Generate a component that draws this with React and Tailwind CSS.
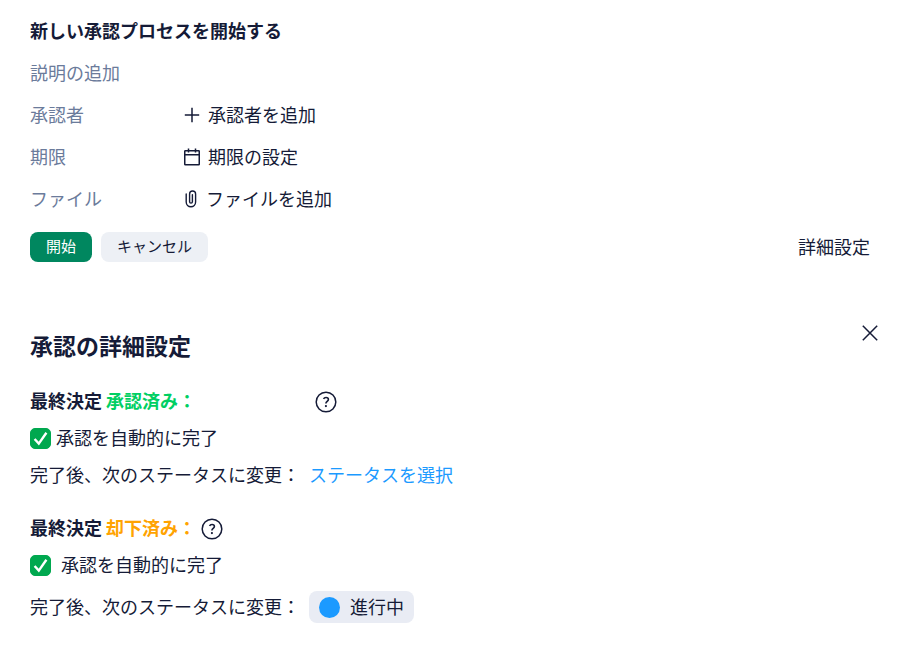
import { useState } from "react";

function PlusIcon() {
  return (
    <svg className="h-4 w-4" viewBox="0 0 16 16" fill="none" stroke="currentColor" strokeWidth="1.5" aria-hidden="true">
      <path d="M8 0.8v14.4M0.8 8h14.4" />
    </svg>
  );
}

function CalendarIcon() {
  return (
    <svg className="h-[18px] w-4" viewBox="0 0 16 18" fill="none" stroke="currentColor" strokeWidth="1.5" aria-hidden="true">
      <rect x="0.75" y="2.75" width="14.5" height="14" rx="0.6" />
      <path d="M0.75 6.75h14.5M4.5 0.5v4M11.5 0.5v4" />
    </svg>
  );
}

function ClipIcon() {
  return (
    <svg className="h-[18px] w-[14px]" viewBox="0 0 14 18" fill="none" stroke="currentColor" strokeWidth="1.4" strokeLinecap="round" aria-hidden="true">
      <path d="M2.2 4v8.1a4.7 4.7 0 0 0 9.4 0V4a3 3 0 0 0-6 0v7.7a1.4 1.4 0 0 0 2.8 0V4.6" />
    </svg>
  );
}

function CloseIcon() {
  return (
    <svg className="h-4 w-4" viewBox="0 0 16 16" fill="none" stroke="currentColor" strokeWidth="1.5" aria-hidden="true">
      <path d="M0.8 0.8l14.4 14.4M15.2 0.8L0.8 15.2" />
    </svg>
  );
}

function HelpButton() {
  return (
    <button type="button" aria-label="ヘルプ" className="h-[22px] w-[22px] shrink-0">
      <svg className="h-full w-full" viewBox="0 0 22 22" fill="none" stroke="currentColor" aria-hidden="true">
        <circle cx="11" cy="11" r="9.8" strokeWidth="1.5" />
        <path d="M8.6 8.1C9 7 9.9 6.5 11 6.5c1.4 0 2.4.8 2.4 2 0 1.9-2.5 2-2.5 4.1" strokeWidth="1.6" />
        <circle cx="10.9" cy="15.1" r="1.1" fill="currentColor" stroke="none" />
      </svg>
    </button>
  );
}

function Field({ label, icon, action }) {
  return (
    <div className="flex h-[42px] items-center">
      <span className="w-[154px] pb-[3px] text-[#6b7b9b]">{label}</span>
      <button type="button" className="flex items-center gap-2">
        {icon}
        <span className="pb-[3px]">{action}</span>
      </button>
    </div>
  );
}

function AutoComplete({ id, className }) {
  const [checked, setChecked] = useState(true);
  return (
    <div className={`flex items-center ${className}`}>
      <span className="grid h-[21px] w-[21px] shrink-0">
        <input
          id={id}
          type="checkbox"
          checked={checked}
          onChange={() => setChecked(!checked)}
          className="col-start-1 row-start-1 h-[21px] w-[21px] appearance-none rounded-[5px] border border-[#00a84f] checked:bg-[#00a84f]"
        />
        {checked && (
          <svg className="pointer-events-none col-start-1 row-start-1 h-[21px] w-[21px]" viewBox="0 0 21 21" fill="none" stroke="white" strokeWidth="2.4" aria-hidden="true">
            <path d="M4.6 11l4.2 4.6L16.4 4.8" />
          </svg>
        )}
      </span>
      <label htmlFor={id} className="pb-[3px]">承認を自動的に完了</label>
    </div>
  );
}

export default function App() {
  return (
    <main className="bg-white px-[30px] pt-[10px] pb-[30px] font-['Noto_Sans_CJK_JP',sans-serif] text-[18px] leading-[26px] text-[#151b37]">
      <section>
        <h1 className="flex h-[42px] items-center pb-[3px] font-bold">新しい承認プロセスを開始する</h1>
        <p className="flex h-[42px] items-center pb-[3px] text-[#6b7b9b]">説明の追加</p>
        <Field label="承認者" icon={<PlusIcon />} action="承認者を追加" />
        <Field label="期限" icon={<CalendarIcon />} action="期限の設定" />
        <Field label="ファイル" icon={<ClipIcon />} action="ファイルを追加" />
        <div className="mt-3 flex items-center">
          <button type="button" className="h-[30px] rounded-lg bg-[#00875f] px-4 pb-[3px] text-[15px] leading-[26px] text-white">
            開始
          </button>
          <button type="button" className="ml-[9px] h-[30px] rounded-lg bg-[#edf0f5] px-4 pb-[3px] text-[15px] leading-[26px]">
            キャンセル
          </button>
          <button type="button" className="ml-auto pb-[3px]">詳細設定</button>
        </div>
      </section>

      <section className="mt-[59px]">
        <div className="flex items-start justify-between">
          <h2 className="pt-[7px] pb-px text-[23px] leading-[34px] font-bold">承認の詳細設定</h2>
          <button type="button" aria-label="閉じる" className="-mr-3 p-1">
            <CloseIcon />
          </button>
        </div>

        <div className="mt-6 flex items-center">
          <h3 className="w-[285px] pb-[3px] font-bold">
            最終決定 <span className="text-[#00cf63]">承認済み：</span>
          </h3>
          <HelpButton />
        </div>
        <AutoComplete id="auto-approved" className="mt-2 gap-[5px]" />
        <div className="mt-2 flex items-center gap-[9px] pb-[3px]">
          <span>完了後、次のステータスに変更：</span>
          <button type="button" className="text-[#1b9aff]">ステータスを選択</button>
        </div>

        <div className="mt-6 flex items-center">
          <h3 className="w-[171px] pb-[3px] font-bold">
            最終決定 <span className="text-[#ffa300]">却下済み：</span>
          </h3>
          <HelpButton />
        </div>
        <AutoComplete id="auto-rejected" className="mt-2 gap-[10px]" />
        <div className="mt-[11px] flex items-center gap-[9px]">
          <span className="pb-[3px]">完了後、次のステータスに変更：</span>
          <button type="button" className="flex h-8 items-center gap-[10px] rounded-lg bg-[#e9ecf4] px-[10px]">
            <span className="h-[21px] w-[21px] rounded-full bg-[#1b9aff]" />
            <span className="pb-[3px]">進行中</span>
          </button>
        </div>
      </section>
    </main>
  );
}
